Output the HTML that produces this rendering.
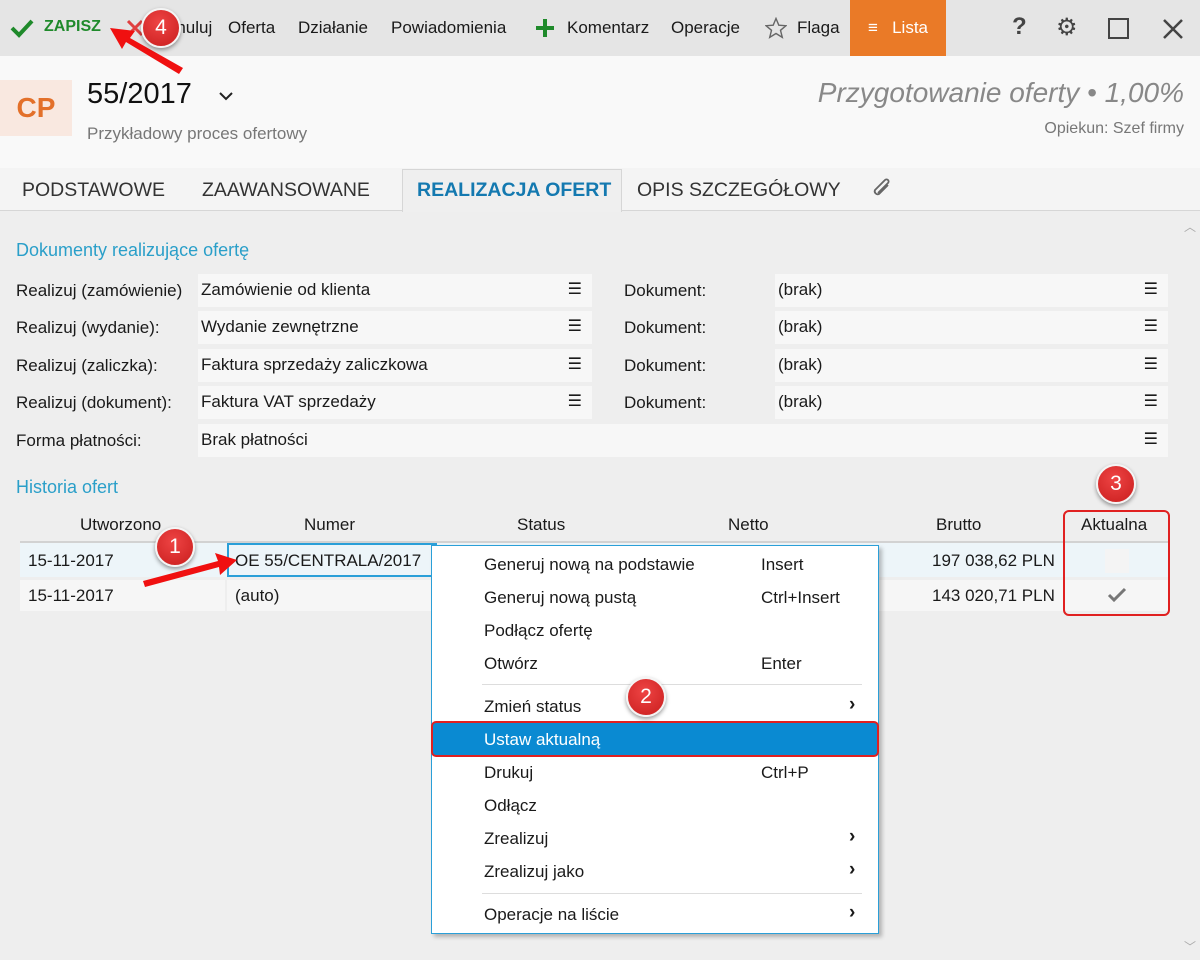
<!DOCTYPE html>
<html><head><meta charset="utf-8"><style>
*{margin:0;padding:0;box-sizing:border-box}
body{width:1200px;height:960px;overflow:hidden;background:#eeeeee;font-family:"Segoe UI","Liberation Sans","DejaVu Sans",sans-serif;font-size:17px;color:#1a1a1a;position:relative}
.abs{position:absolute;white-space:nowrap}
#tb{position:absolute;left:0;top:0;width:1200px;height:56px;background:#e5e5e5}
#hd{position:absolute;left:0;top:56px;width:1200px;height:112px;background:#f9f9f9}
#tabs{position:absolute;left:0;top:168px;width:1200px;height:43px;background:#f4f4f4;border-bottom:1px solid #d6d6d6}
.tab{position:absolute;top:11px;font-size:19.5px;color:#333}
.fld{position:absolute;height:33px;background:#f7f7f7}
.ham{position:absolute;right:10px;top:5px;font-size:16px}
.lbl{position:absolute}
.circ{position:absolute;width:40px;height:40px;border-radius:50%;background:radial-gradient(circle at 45% 35%,#ee4444,#c91d1d);border:2px solid #f4f4f4;box-shadow:0 2px 4px rgba(0,0,0,.4);color:#fff;font-size:21px;text-align:center;line-height:35px}
.mi{position:absolute;left:52px;font-size:17px}
.sc{position:absolute;left:329px;font-size:17px}
.ar{position:absolute;left:417px;font-size:19px;font-weight:bold}
</style></head><body>
<div id="tb">
 <svg class="abs" style="left:10px;top:18px" width="24" height="20"><path d="M2 10 L9 17 L22 3" stroke="#1f8a2b" stroke-width="4" fill="none"/></svg>
 <div class="abs" style="left:44px;top:18px;color:#1f8a2b;font-weight:bold;font-size:16px">ZAPISZ</div>
 <svg class="abs" style="left:126px;top:19px" width="18" height="18"><path d="M2 2L16 16M16 2L2 16" stroke="#e04040" stroke-width="3"/></svg>
 <div class="abs" style="left:165px;top:18px">Anuluj</div>
 <div class="abs" style="left:228px;top:18px">Oferta</div>
 <div class="abs" style="left:298px;top:18px">Działanie</div>
 <div class="abs" style="left:391px;top:18px">Powiadomienia</div>
 <svg class="abs" style="left:535px;top:18px" width="20" height="20"><path d="M10 1V19M1 10H19" stroke="#1f8a2b" stroke-width="4"/></svg>
 <div class="abs" style="left:567px;top:18px">Komentarz</div>
 <div class="abs" style="left:671px;top:18px">Operacje</div>
 <svg class="abs" style="left:765px;top:17px" width="22" height="22"><path d="M11 1.5L13.8 8.2 21 8.7 15.5 13.3 17.3 20.4 11 16.5 4.7 20.4 6.5 13.3 1 8.7 8.2 8.2Z" stroke="#666" stroke-width="1.4" fill="none"/></svg>
 <div class="abs" style="left:797px;top:18px">Flaga</div>
 <div class="abs" style="left:850px;top:0;width:96px;height:56px;background:#ea7a27"></div>
 <div class="abs" style="left:868px;top:18px;color:#fff">≡&nbsp;&nbsp; Lista</div>
 <div class="abs" style="left:1012px;top:13px;font-size:24px;color:#444;font-weight:bold">?</div>
 <div class="abs" style="left:1056px;top:13px;font-size:24px;color:#444">⚙</div>
 <div class="abs" style="left:1108px;top:18px;width:21px;height:21px;border:2.5px solid #444"></div>
 <svg class="abs" style="left:1162px;top:18px" width="22" height="22"><path d="M2 2L20 20M20 2L2 20" stroke="#444" stroke-width="2.5"/></svg>
</div>
<div id="hd">
 <div class="abs" style="left:0;top:24px;width:72px;height:56px;background:#f9e8e0;color:#e3702a;font-size:28px;font-weight:600;text-align:center;line-height:56px">CP</div>
 <div class="abs" style="left:87px;top:22px;font-size:29px;color:#111">55/2017</div>
 <svg class="abs" style="left:218px;top:34px" width="16" height="12"><path d="M2 3L8 9 14 3" stroke="#222" stroke-width="2" fill="none"/></svg>
 <div class="abs" style="left:87px;top:68px;font-size:17px;color:#777">Przykładowy proces ofertowy</div>
 <div class="abs" style="right:16px;top:21px;font-size:28px;color:#888;font-style:italic">Przygotowanie oferty • 1,00%</div>
 <div class="abs" style="right:16px;top:64px;font-size:16px;color:#777">Opiekun: Szef firmy</div>
</div>
<div id="tabs">
 <div class="tab" style="left:22px">PODSTAWOWE</div>
 <div class="tab" style="left:202px">ZAAWANSOWANE</div>
 <div class="abs" style="left:402px;top:1px;width:220px;height:43px;background:#efefef;border:1px solid #d6d6d6;border-bottom:none"></div>
 <div class="tab" style="left:417px;color:#1479b0;font-weight:bold">REALIZACJA OFERT</div>
 <div class="tab" style="left:637px">OPIS SZCZEGÓŁOWY</div>
 <svg class="abs" style="left:870px;top:8px" width="24" height="28"><path d="M18 9L9 18a3 3 0 0 1-4-4L15 4a2 2 0 0 1 3 3L8 17" stroke="#666" stroke-width="1.8" fill="none"/></svg>
</div>
<div class="abs" style="left:1184px;top:218px;color:#aaa;font-size:12px">︿</div>
<div class="abs" style="left:1184px;top:938px;color:#aaa;font-size:12px">﹀</div>
<div class="abs" style="left:16px;top:240px;color:#2a9fc9;font-size:18px">Dokumenty realizujące ofertę</div>

<div class="lbl" style="left:16px;top:281px">Realizuj (zamówienie)</div>
<div class="fld" style="left:198px;top:274px;width:394px"><span class="abs" style="left:3px;top:6px">Zamówienie od klienta</span><span class="ham">☰</span></div>
<div class="lbl" style="left:624px;top:281px">Dokument:</div>
<div class="fld" style="left:775px;top:274px;width:393px"><span class="abs" style="left:3px;top:6px">(brak)</span><span class="ham">☰</span></div>

<div class="lbl" style="left:16px;top:318px">Realizuj (wydanie):</div>
<div class="fld" style="left:198px;top:311px;width:394px"><span class="abs" style="left:3px;top:6px">Wydanie zewnętrzne</span><span class="ham">☰</span></div>
<div class="lbl" style="left:624px;top:318px">Dokument:</div>
<div class="fld" style="left:775px;top:311px;width:393px"><span class="abs" style="left:3px;top:6px">(brak)</span><span class="ham">☰</span></div>

<div class="lbl" style="left:16px;top:356px">Realizuj (zaliczka):</div>
<div class="fld" style="left:198px;top:349px;width:394px"><span class="abs" style="left:3px;top:6px">Faktura sprzedaży zaliczkowa</span><span class="ham">☰</span></div>
<div class="lbl" style="left:624px;top:356px">Dokument:</div>
<div class="fld" style="left:775px;top:349px;width:393px"><span class="abs" style="left:3px;top:6px">(brak)</span><span class="ham">☰</span></div>

<div class="lbl" style="left:16px;top:393px">Realizuj (dokument):</div>
<div class="fld" style="left:198px;top:386px;width:394px"><span class="abs" style="left:3px;top:6px">Faktura VAT sprzedaży</span><span class="ham">☰</span></div>
<div class="lbl" style="left:624px;top:393px">Dokument:</div>
<div class="fld" style="left:775px;top:386px;width:393px"><span class="abs" style="left:3px;top:6px">(brak)</span><span class="ham">☰</span></div>

<div class="lbl" style="left:16px;top:431px">Forma płatności:</div>
<div class="fld" style="left:198px;top:424px;width:970px"><span class="abs" style="left:3px;top:6px">Brak płatności</span><span class="ham">☰</span></div>

<div class="abs" style="left:16px;top:477px;color:#2a9fc9;font-size:18px">Historia ofert</div>
<div class="abs" style="left:80px;top:515px">Utworzono</div>
<div class="abs" style="left:304px;top:515px">Numer</div>
<div class="abs" style="left:517px;top:515px">Status</div>
<div class="abs" style="left:728px;top:515px">Netto</div>
<div class="abs" style="left:936px;top:515px">Brutto</div>
<div class="abs" style="left:1081px;top:515px">Aktualna</div>
<div class="abs" style="left:20px;top:541px;width:1148px;height:2px;background:#d2d2d2"></div>
<div class="abs" style="left:20px;top:543px;width:1148px;height:34px;background:#edf5f9"></div>
<div class="abs" style="left:20px;top:580px;width:1148px;height:31px;background:#f6f6f6"></div>
<div class="abs" style="left:225px;top:580px;width:2px;height:31px;background:#eee"></div>
<div class="abs" style="left:28px;top:551px">15-11-2017</div>
<div class="abs" style="left:28px;top:586px">15-11-2017</div>
<div class="abs" style="left:227px;top:543px;width:210px;height:34px;border:2px solid #2a9fd8;background:#edf5f9"></div>
<div class="abs" style="left:235px;top:551px">OE 55/CENTRALA/2017</div>
<div class="abs" style="left:235px;top:586px">(auto)</div>
<div class="abs" style="left:932px;top:551px">197 038,62 PLN</div>
<div class="abs" style="left:932px;top:586px">143 020,71 PLN</div>
<div class="abs" style="left:1105px;top:549px;width:24px;height:24px;background:#f4f4f4"></div>
<svg class="abs" style="left:1107px;top:587px" width="20" height="16"><path d="M2 8L7 13 18 2" stroke="#777" stroke-width="3" fill="none"/></svg>

<div class="abs" style="left:431px;top:545px;width:448px;height:389px;background:#fff;border:1px solid #2a9fd8;box-shadow:3px 3px 4px rgba(0,0,0,.25)">
 <div class="mi" style="top:9px">Generuj nową na podstawie</div><div class="sc" style="top:9px">Insert</div>
 <div class="mi" style="top:42px">Generuj nową pustą</div><div class="sc" style="top:42px">Ctrl+Insert</div>
 <div class="mi" style="top:75px">Podłącz ofertę</div>
 <div class="mi" style="top:108px">Otwórz</div><div class="sc" style="top:108px">Enter</div>
 <div class="abs" style="left:50px;top:138px;width:380px;height:1px;background:#ddd"></div>
 <div class="mi" style="top:151px">Zmień status</div><div class="ar" style="top:148px">›</div>
 <div class="abs" style="left:1px;top:177px;width:444px;height:33px;background:#0a8ad2"></div>
 <div class="mi" style="top:184px;color:#fff">Ustaw aktualną</div>
 <div class="mi" style="top:217px">Drukuj</div><div class="sc" style="top:217px">Ctrl+P</div>
 <div class="mi" style="top:250px">Odłącz</div>
 <div class="mi" style="top:283px">Zrealizuj</div><div class="ar" style="top:280px">›</div>
 <div class="mi" style="top:316px">Zrealizuj jako</div><div class="ar" style="top:313px">›</div>
 <div class="abs" style="left:50px;top:347px;width:380px;height:1px;background:#ddd"></div>
 <div class="mi" style="top:359px">Operacje na liście</div><div class="ar" style="top:356px">›</div>
</div>

<div class="abs" style="left:431px;top:721px;width:448px;height:36px;border:2px solid #e02020;border-radius:5px"></div>
<div class="abs" style="left:1063px;top:510px;width:107px;height:106px;border:2px solid #e02020;border-radius:6px"></div>

<svg class="abs" style="left:0;top:0" width="1200" height="960">
 <path d="M143 581 L218 561 L215 553 L237 560 L220 575 L219 567 L145 587Z" fill="#f01010"/>
 <path d="M183 68 L130 38 L135 31 L110 28 L122 49 L126 42 L179 74Z" fill="#f01010"/>
</svg>
<div class="circ" style="left:155px;top:527px">1</div>
<div class="circ" style="left:626px;top:677px">2</div>
<div class="circ" style="left:1096px;top:464px">3</div>
<div class="circ" style="left:141px;top:8px">4</div>
</body></html>
